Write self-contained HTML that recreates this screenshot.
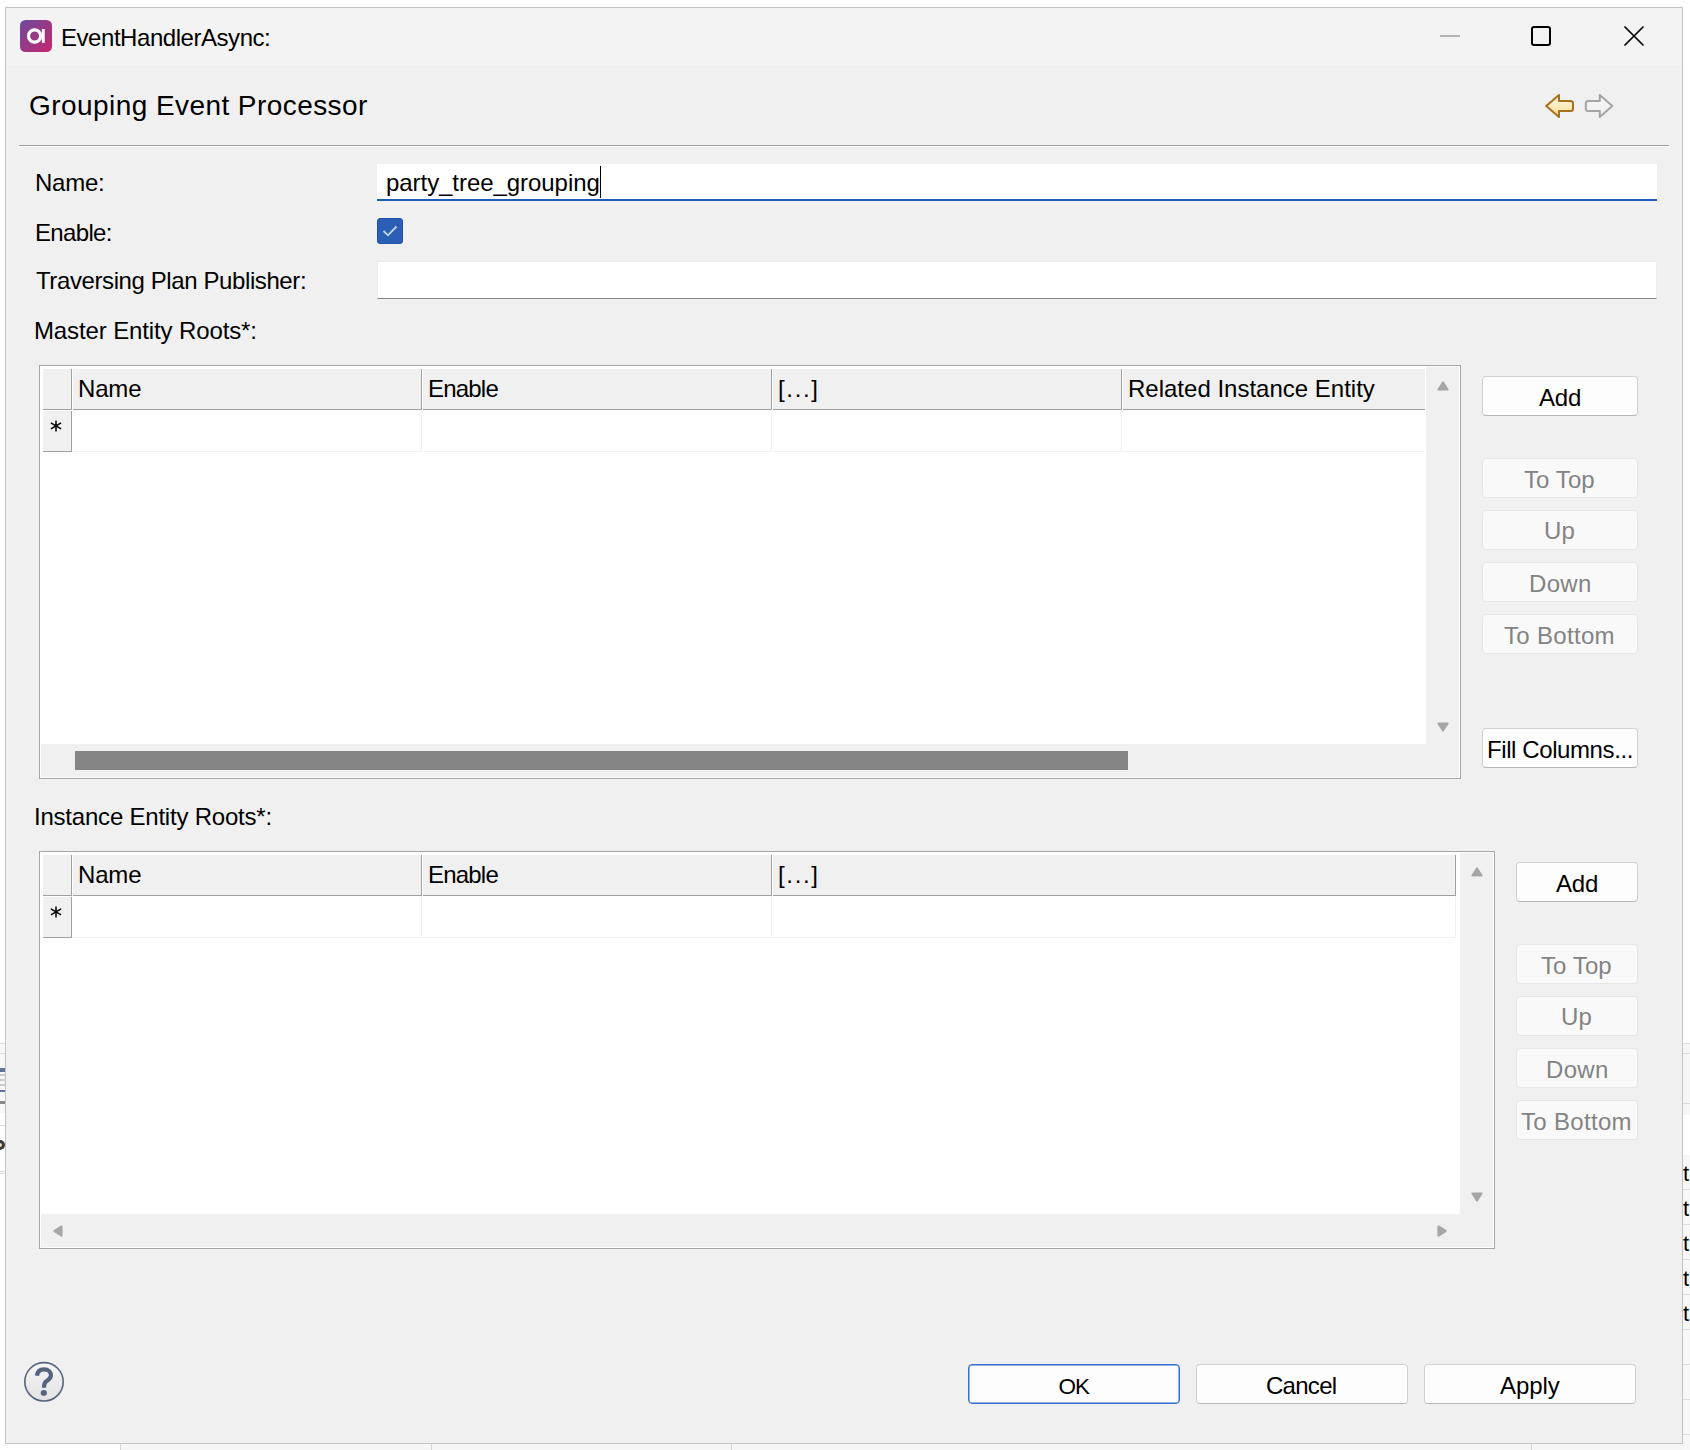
<!DOCTYPE html>
<html><head><meta charset="utf-8">
<style>
*{box-sizing:border-box;margin:0;padding:0}
html,body{width:1690px;height:1450px;overflow:hidden;background:#fff}
body{position:relative;font-family:"Liberation Sans",sans-serif;}
.a{position:absolute}
.t{position:absolute;line-height:1;white-space:nowrap}
.btn{position:absolute;background:#fdfdfd;border:1px solid #d0d0d0;border-bottom-color:#b8b8b8;border-radius:4px}
.btnd{position:absolute;background:#f9f9f9;border:1px solid #e6e6e6;border-radius:4px}
.hc{position:absolute;background:#f0f0f0;border-right:1px solid #a0a0a0;border-bottom:1px solid #a0a0a0}
.dc{position:absolute;background:#fff;border-right:1px solid #f0f0f0;border-bottom:1px solid #f0f0f0}
</style></head><body>
<!-- background app remnants -->
<div class="a" style="left:120px;top:1444px;width:1570px;height:6px;background:#f5f5f5"></div>
<div class="a" style="left:120px;top:1444px;width:1px;height:6px;background:#d5d5d5"></div>
<div class="a" style="left:431px;top:1444px;width:1px;height:6px;background:#d5d5d5"></div>
<div class="a" style="left:731px;top:1444px;width:1px;height:6px;background:#d5d5d5"></div>
<div class="a" style="left:1531px;top:1444px;width:1px;height:6px;background:#d5d5d5"></div>
<div class="a" style="left:1683px;top:1043px;width:7px;height:72px;background:#f6f6f6"></div>
<div class="a" style="left:1683px;top:1043px;width:7px;height:1px;background:#dcdcdc"></div>
<div class="a" style="left:1683px;top:1053px;width:7px;height:1px;background:#dcdcdc"></div>
<div class="a" style="left:1683px;top:1103px;width:7px;height:1px;background:#dcdcdc"></div>
<div class="a" style="left:1683px;top:1155px;width:7px;height:295px;background:#f7f7f7"></div>
<div class="a" style="left:1683px;top:1189px;width:7px;height:1px;background:#dcdcdc"></div>
<div class="a" style="left:1683px;top:1224px;width:7px;height:1px;background:#dcdcdc"></div>
<div class="a" style="left:1683px;top:1259px;width:7px;height:1px;background:#dcdcdc"></div>
<div class="a" style="left:1683px;top:1294px;width:7px;height:1px;background:#dcdcdc"></div>
<div class="a" style="left:1683px;top:1329px;width:7px;height:1px;background:#dcdcdc"></div>
<div class="a" style="left:1683px;top:1364px;width:7px;height:1px;background:#dcdcdc"></div>
<div class="a" style="left:1683px;top:1399px;width:7px;height:1px;background:#dcdcdc"></div>
<div class="a" style="left:1683px;top:1434px;width:7px;height:1px;background:#dcdcdc"></div>
<div class="t" style="left:1683px;top:1163.4px;font-size:22px;color:#000">t</div>
<div class="t" style="left:1683px;top:1198.4px;font-size:22px;color:#000">t</div>
<div class="t" style="left:1683px;top:1233.4px;font-size:22px;color:#000">t</div>
<div class="t" style="left:1683px;top:1268.4px;font-size:22px;color:#000">t</div>
<div class="t" style="left:1683px;top:1303.4px;font-size:22px;color:#000">t</div>

<div class="a" style="left:0;top:1043px;width:5px;height:70px;background:#f7f7f7"></div>
<div class="a" style="left:0;top:1043px;width:5px;height:1px;background:#dcdcdc"></div>
<div class="a" style="left:0;top:1053px;width:5px;height:1px;background:#dcdcdc"></div>
<div class="a" style="left:0;top:1068px;width:5px;height:4px;background:#62739a"></div>
<div class="a" style="left:0;top:1074px;width:5px;height:2px;background:#c5cad6"></div>
<div class="a" style="left:0;top:1079px;width:5px;height:2px;background:#c5cad6"></div>
<div class="a" style="left:0;top:1084px;width:5px;height:2px;background:#c5cad6"></div>
<div class="a" style="left:0;top:1090px;width:5px;height:2px;background:#62739a"></div>
<div class="a" style="left:0;top:1101px;width:5px;height:3px;background:#8a8a8a"></div>
<div class="a" style="left:0;top:1125px;width:5px;height:1px;background:#e0e0e0"></div>
<div class="a" style="left:0;top:1140px;width:5px;height:10px;border-radius:0 5px 5px 0;border:3px solid #3a3a3a;border-left:none;background:#f3dcc0"></div>
<div class="a" style="left:0;top:1171px;width:5px;height:1px;background:#dcdcdc"></div>
<div class="a" style="left:0;top:1173px;width:5px;height:1px;background:#dcdcdc"></div>
<!-- window -->
<div class="a" style="left:5px;top:7px;width:1678px;height:1437px;border:1px solid #c4c4c4;background:#f0f0f0"></div>
<div class="a" style="left:6px;top:8px;width:1676px;height:57px;background:#f3f3f3"></div>

<!-- app icon -->
<svg class="a" style="left:20px;top:20px" width="32" height="32" viewBox="0 0 32 32">
<defs><linearGradient id="ig" x1="0" y1="0" x2="1" y2="1"><stop offset="0" stop-color="#6a4c9c"/><stop offset="1" stop-color="#c8266f"/></linearGradient></defs>
<rect x="0" y="0" width="32" height="32" rx="5.5" fill="url(#ig)"/>
<circle cx="14.6" cy="16" r="6.1" fill="none" stroke="#fff" stroke-width="3.2"/>
<rect x="21.9" y="9" width="2.8" height="13.9" fill="#fff"/>
</svg>

<!-- window controls -->
<div class="a" style="left:1440px;top:35px;width:20px;height:1.5px;background:#b4b4b4"></div>
<div class="a" style="left:1531px;top:26px;width:20px;height:20px;border:2px solid #000;border-radius:3px"></div>
<svg class="a" style="left:1620px;top:22px" width="28" height="28" viewBox="0 0 28 28"><path d="M5 5 L23 23 M23 5 L5 23" stroke="#000" stroke-width="1.75" stroke-linecap="round"/></svg>

<!-- nav arrows -->
<svg class="a" style="left:1544px;top:93px" width="72" height="27" viewBox="0 0 72 27">
<defs>
<linearGradient id="bg1" x1="0" y1="0" x2="0" y2="1"><stop offset="0" stop-color="#fffbe6"/><stop offset="1" stop-color="#f7dc94"/></linearGradient>
<linearGradient id="bg2" x1="0" y1="0" x2="0" y2="1"><stop offset="0" stop-color="#fafafa"/><stop offset="1" stop-color="#ececec"/></linearGradient>
</defs>
<path d="M2.2,13 L15,2 L15,8 L26.5,8 Q29,8 29,10.5 L29,15.5 Q29,18 26.5,18 L15,18 L15,24 Z" fill="url(#bg1)" stroke="#a86f1c" stroke-width="2" stroke-linejoin="round"/>
<path d="M68.3,13 L55.8,2 L55.8,8 L44.3,8 Q41.8,8 41.8,10.5 L41.8,15.5 Q41.8,18 44.3,18 L55.8,18 L55.8,24 Z" fill="url(#bg2)" stroke="#a4a4a4" stroke-width="2" stroke-linejoin="round"/>
</svg>

<!-- separator -->
<div class="a" style="left:19px;top:145px;width:1650px;height:1px;background:#a0a0a0"></div>
<div class="a" style="left:19px;top:146px;width:1650px;height:1px;background:#fff"></div>

<!-- name input -->
<div class="a" style="left:377px;top:164px;width:1280px;height:37px;background:#fff;border-bottom:2px solid #1f5bb8"></div>
<div class="a" style="left:600px;top:166px;width:1px;height:32px;background:#000"></div>
<!-- checkbox -->
<div class="a" style="left:377px;top:218px;width:26px;height:26px;background:#2a5fb5;border-radius:3px;border:1px solid #1f52aa"></div>
<svg class="a" style="left:377px;top:218px" width="26" height="26" viewBox="0 0 26 26"><path d="M6.5 13 L11 17.3 L19.5 8.5" fill="none" stroke="#c4d6f0" stroke-width="1.8"/></svg>
<!-- traversing input -->
<div class="a" style="left:377px;top:261px;width:1280px;height:38px;background:#fff;border:1px solid #ececec;border-bottom:1px solid #868686"></div>

<div class="a" style="left:39px;top:365px;width:1422px;height:414px;border:1px solid #a5a5a5;background:#fff"></div>
<div class="a" style="left:1426px;top:367px;width:33px;height:377px;background:#f0f0f0"></div>
<div class="a" style="left:41px;top:744px;width:1418px;height:33px;background:#f0f0f0"></div>
<div class="a" style="left:75px;top:751px;width:1053px;height:19px;background:#858585"></div>
<div class="a" style="left:43px;top:369px;width:29px;height:41px;background:#f0f0f0;border-right:1px solid #a0a0a0;border-bottom:1px solid #a0a0a0"></div>
<div class="a" style="left:43px;top:411px;width:29px;height:41px;background:#f0f0f0;border-right:1px solid #a0a0a0;border-bottom:1px solid #a0a0a0"></div>
<div class="a" style="left:73px;top:369px;width:349px;height:41px;background:#f0f0f0;border-right:1px solid #a0a0a0;border-bottom:1px solid #a0a0a0"></div>
<div class="a" style="left:73px;top:411px;width:349px;height:41px;border-right:1px solid #f0f0f0;border-bottom:1px solid #f0f0f0"></div>
<div class="a" style="left:423px;top:369px;width:349px;height:41px;background:#f0f0f0;border-right:1px solid #a0a0a0;border-bottom:1px solid #a0a0a0"></div>
<div class="a" style="left:423px;top:411px;width:349px;height:41px;border-right:1px solid #f0f0f0;border-bottom:1px solid #f0f0f0"></div>
<div class="a" style="left:773px;top:369px;width:349px;height:41px;background:#f0f0f0;border-right:1px solid #a0a0a0;border-bottom:1px solid #a0a0a0"></div>
<div class="a" style="left:773px;top:411px;width:349px;height:41px;border-right:1px solid #f0f0f0;border-bottom:1px solid #f0f0f0"></div>
<div class="a" style="left:1123px;top:369px;width:302px;height:41px;background:#f0f0f0;border-bottom:1px solid #a0a0a0"></div>
<div class="a" style="left:1123px;top:411px;width:302px;height:41px;border-bottom:1px solid #f0f0f0"></div>
<svg class="a" style="left:1436.5px;top:380.5px" width="12" height="10" viewBox="0 0 12 10"><path d="M1.5,8.5 L6,1.5 L10.5,8.5 Z" fill="#a6a6a6" stroke="#a6a6a6" stroke-width="2.2" stroke-linejoin="round"/></svg>
<svg class="a" style="left:1436.5px;top:721.5px" width="12" height="10" viewBox="0 0 12 10"><path d="M1.5,1.5 L6,8.5 L10.5,1.5 Z" fill="#a6a6a6" stroke="#a6a6a6" stroke-width="2.2" stroke-linejoin="round"/></svg>
<div class="a" style="left:39px;top:851px;width:1456px;height:398px;border:1px solid #a5a5a5;background:#fff"></div>
<div class="a" style="left:1460px;top:853px;width:33px;height:361px;background:#f0f0f0"></div>
<div class="a" style="left:41px;top:1214px;width:1452px;height:33px;background:#f0f0f0"></div>
<div class="a" style="left:43px;top:855px;width:29px;height:41px;background:#f0f0f0;border-right:1px solid #a0a0a0;border-bottom:1px solid #a0a0a0"></div>
<div class="a" style="left:43px;top:897px;width:29px;height:41px;background:#f0f0f0;border-right:1px solid #a0a0a0;border-bottom:1px solid #a0a0a0"></div>
<div class="a" style="left:73px;top:855px;width:349px;height:41px;background:#f0f0f0;border-right:1px solid #a0a0a0;border-bottom:1px solid #a0a0a0"></div>
<div class="a" style="left:73px;top:897px;width:349px;height:41px;border-right:1px solid #f0f0f0;border-bottom:1px solid #f0f0f0"></div>
<div class="a" style="left:423px;top:855px;width:349px;height:41px;background:#f0f0f0;border-right:1px solid #a0a0a0;border-bottom:1px solid #a0a0a0"></div>
<div class="a" style="left:423px;top:897px;width:349px;height:41px;border-right:1px solid #f0f0f0;border-bottom:1px solid #f0f0f0"></div>
<div class="a" style="left:773px;top:855px;width:683px;height:41px;background:#f0f0f0;border-right:1px solid #a0a0a0;border-bottom:1px solid #a0a0a0"></div>
<div class="a" style="left:773px;top:897px;width:683px;height:41px;border-right:1px solid #f0f0f0;border-bottom:1px solid #f0f0f0"></div>
<svg class="a" style="left:1470.5px;top:866.5px" width="12" height="10" viewBox="0 0 12 10"><path d="M1.5,8.5 L6,1.5 L10.5,8.5 Z" fill="#a6a6a6" stroke="#a6a6a6" stroke-width="2.2" stroke-linejoin="round"/></svg>
<svg class="a" style="left:1470.5px;top:1191.5px" width="12" height="10" viewBox="0 0 12 10"><path d="M1.5,1.5 L6,8.5 L10.5,1.5 Z" fill="#a6a6a6" stroke="#a6a6a6" stroke-width="2.2" stroke-linejoin="round"/></svg>
<svg class="a" style="left:52.5px;top:1224.5px" width="10" height="12" viewBox="0 0 10 12"><path d="M8.5,1.5 L1.5,6 L8.5,10.5 Z" fill="#a6a6a6" stroke="#a6a6a6" stroke-width="2.2" stroke-linejoin="round"/></svg>
<svg class="a" style="left:1436.5px;top:1224.5px" width="10" height="12" viewBox="0 0 10 12"><path d="M1.5,1.5 L8.5,6 L1.5,10.5 Z" fill="#a6a6a6" stroke="#a6a6a6" stroke-width="2.2" stroke-linejoin="round"/></svg>
<div class="btn" style="left:1482px;top:376px;width:156px;height:40px"></div>
<div class="btnd" style="left:1482px;top:458px;width:156px;height:40px"></div>
<div class="btnd" style="left:1482px;top:510px;width:156px;height:40px"></div>
<div class="btnd" style="left:1482px;top:562px;width:156px;height:40px"></div>
<div class="btnd" style="left:1482px;top:614px;width:156px;height:40px"></div>
<div class="btn" style="left:1482px;top:728px;width:156px;height:40px"></div>
<div class="btn" style="left:1516px;top:862px;width:122px;height:40px"></div>
<div class="btnd" style="left:1516px;top:944px;width:122px;height:40px"></div>
<div class="btnd" style="left:1516px;top:996px;width:122px;height:40px"></div>
<div class="btnd" style="left:1516px;top:1048px;width:122px;height:40px"></div>
<div class="btnd" style="left:1516px;top:1100px;width:122px;height:40px"></div>
<svg class="a" style="left:47.5px;top:417.5px" width="16" height="16" viewBox="0 0 16 16"><path d="M8 2.5 L8 13.4 M2.9 4.9 L13.1 10.9 M2.9 10.9 L13.1 4.9" stroke="#000" stroke-width="1.5"/></svg>
<svg class="a" style="left:47.5px;top:903.5px" width="16" height="16" viewBox="0 0 16 16"><path d="M8 2.5 L8 13.4 M2.9 4.9 L13.1 10.9 M2.9 10.9 L13.1 4.9" stroke="#000" stroke-width="1.5"/></svg>

<!-- help icon -->
<svg class="a" style="left:18px;top:1356px" width="52" height="52" viewBox="0 0 52 52">
<defs><linearGradient id="hg" x1="0" y1="0" x2="0" y2="1"><stop offset="0" stop-color="#f6f6f6"/><stop offset="1" stop-color="#e2e2e2"/></linearGradient></defs>
<circle cx="26" cy="25.8" r="19.2" fill="url(#hg)" stroke="#56647f" stroke-width="1.6"/>
<path d="M19,19.8 C19.5,14.8 22.5,13.4 26,13.4 C30.2,13.4 33,15.8 33,19.3 C33,22.6 30.6,24 28.3,25.4 C26.3,26.6 26,28.5 26,31.7" fill="none" stroke="#56647f" stroke-width="4.2"/>
<ellipse cx="25.8" cy="36.9" rx="3.1" ry="2.8" fill="#56647f"/>
</svg>

<!-- bottom buttons -->
<div class="a" style="left:968px;top:1364px;width:212px;height:40px;background:#fdfdfd;border:1px solid #2f6fd0;border-radius:4px;box-shadow:inset 0 0 0 0.5px #2f6fd0"></div>
<div class="btn" style="left:1196px;top:1364px;width:212px;height:40px"></div>
<div class="btn" style="left:1424px;top:1364px;width:212px;height:40px"></div>

<div id="title" class="t" style="left:61.00px;top:26.01px;font-size:24px;color:#000;letter-spacing:-0.453px;">EventHandlerAsync:</div>
<div id="hdr" class="t" style="left:29.00px;top:91.70px;font-size:28px;color:#000;letter-spacing:0.435px;font-weight:normal;">Grouping Event Processor</div>
<div id="l_name" class="t" style="left:35.00px;top:171.01px;font-size:24px;color:#000;letter-spacing:-0.250px;">Name:</div>
<div id="l_enable" class="t" style="left:35.00px;top:220.72px;font-size:24px;color:#000;letter-spacing:-0.667px;">Enable:</div>
<div id="l_trav" class="t" style="left:36.00px;top:268.81px;font-size:24px;color:#000;letter-spacing:-0.400px;">Traversing Plan Publisher:</div>
<div id="l_master" class="t" style="left:34.00px;top:318.61px;font-size:24px;color:#000;letter-spacing:-0.120px;">Master Entity Roots*:</div>
<div id="v_name" class="t" style="left:386.00px;top:171.40px;font-size:24px;color:#000;letter-spacing:-0.056px;">party_tree_grouping</div>
<div id="h1_name" class="t" style="left:78.00px;top:377.31px;font-size:24px;color:#000;letter-spacing:-0.167px;">Name</div>
<div id="h1_enable" class="t" style="left:428.00px;top:377.31px;font-size:24px;color:#000;letter-spacing:-0.800px;">Enable</div>
<div id="h1_dots" class="t" style="left:778.00px;top:377.31px;font-size:24px;color:#000;letter-spacing:1.675px;">[...]</div>
<div id="h1_rel" class="t" style="left:1128.00px;top:377.31px;font-size:24px;color:#000;letter-spacing:0.000px;">Related Instance Entity</div>
<div id="b1_add" class="t" style="left:1539.00px;top:385.90px;font-size:24px;color:#000;letter-spacing:-0.200px;">Add</div>
<div id="b1_totop" class="t" style="left:1524.00px;top:467.61px;font-size:24px;color:#838383;letter-spacing:0.080px;">To Top</div>
<div id="b1_up" class="t" style="left:1544.00px;top:519.31px;font-size:24px;color:#838383;letter-spacing:0.100px;">Up</div>
<div id="b1_down" class="t" style="left:1529.00px;top:572.22px;font-size:24px;color:#838383;letter-spacing:0.300px;">Down</div>
<div id="b1_tobot" class="t" style="left:1504.00px;top:624.01px;font-size:24px;color:#838383;letter-spacing:0.312px;">To Bottom</div>
<div id="b1_fill" class="t" style="left:1487.00px;top:737.72px;font-size:24px;color:#000;letter-spacing:-0.407px;">Fill Columns...</div>
<div id="l_inst" class="t" style="left:34.00px;top:805.01px;font-size:24px;color:#000;letter-spacing:-0.214px;">Instance Entity Roots*:</div>
<div id="h2_name" class="t" style="left:78.00px;top:863.31px;font-size:24px;color:#000;letter-spacing:-0.167px;">Name</div>
<div id="h2_enable" class="t" style="left:428.00px;top:863.31px;font-size:24px;color:#000;letter-spacing:-0.800px;">Enable</div>
<div id="h2_dots" class="t" style="left:778.00px;top:863.31px;font-size:24px;color:#000;letter-spacing:1.675px;">[...]</div>
<div id="b2_add" class="t" style="left:1556.00px;top:871.90px;font-size:24px;color:#000;letter-spacing:-0.200px;">Add</div>
<div id="b2_totop" class="t" style="left:1541.00px;top:953.61px;font-size:24px;color:#838383;letter-spacing:0.080px;">To Top</div>
<div id="b2_up" class="t" style="left:1561.00px;top:1005.31px;font-size:24px;color:#838383;letter-spacing:0.100px;">Up</div>
<div id="b2_down" class="t" style="left:1546.00px;top:1058.22px;font-size:24px;color:#838383;letter-spacing:0.300px;">Down</div>
<div id="b2_tobot" class="t" style="left:1521.00px;top:1110.01px;font-size:24px;color:#838383;letter-spacing:0.312px;">To Bottom</div>
<div id="ok" class="t" style="left:1058.50px;top:1376.00px;font-size:22.5px;color:#000;letter-spacing:-1.000px;">OK</div>
<div id="cancel" class="t" style="left:1266.00px;top:1374.01px;font-size:24px;color:#000;letter-spacing:-0.720px;">Cancel</div>
<div id="apply" class="t" style="left:1500.00px;top:1374.01px;font-size:24px;color:#000;letter-spacing:-0.075px;">Apply</div>
</body></html>
